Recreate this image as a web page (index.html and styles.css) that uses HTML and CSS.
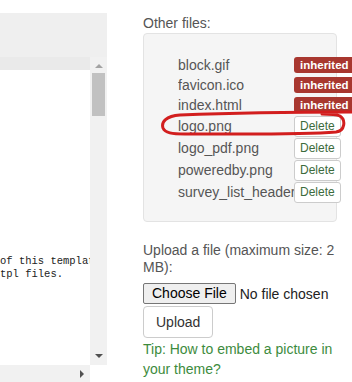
FILE: index.html
```html
<!DOCTYPE html>
<html>
<head>
  <title>Template editor - files</title>
  <link rel="stylesheet" href="styles.css">
</head>
<body>
  <div class="page">
    <div class="editor-pane">
      <div class="editor-head"></div>
      <div class="editor-body">
        <div class="code">
          <div class="code-bar"></div>
          <pre class="code-text">of this template
tpl files.</pre>
        </div>
        <div class="vscroll">
          <span class="arrow arrow-up"></span>
          <span class="thumb"></span>
          <span class="arrow arrow-down"></span>
        </div>
        <div class="hscroll"><span class="arrow arrow-right"></span></div>
        <div class="corner"></div>
      </div>
    </div>

    <div class="files-pane">
      <div class="files-label">Other files:</div>
      <div class="well">
        <ul class="file-list">
          <li class="file-row"><span class="file-name">block.gif</span><span class="badge">inherited</span></li>
          <li class="file-row"><span class="file-name">favicon.ico</span><span class="badge">inherited</span></li>
          <li class="file-row"><span class="file-name">index.html</span><span class="badge">inherited</span></li>
          <li class="file-row own"><span class="file-name">logo.png</span><button class="btn-delete" type="button">Delete</button></li>
          <li class="file-row own"><span class="file-name">logo_pdf.png</span><button class="btn-delete" type="button">Delete</button></li>
          <li class="file-row own"><span class="file-name">poweredby.png</span><button class="btn-delete" type="button">Delete</button></li>
          <li class="file-row own"><span class="file-name">survey_list_header.png</span><button class="btn-delete" type="button">Delete</button></li>
        </ul>
      </div>

      <form class="upload">
        <label class="upload-label" for="upload-file">Upload a file (maximum size: 2 MB):</label>
        <div class="file-pick">
          <input type="file" id="upload-file" class="file-input">
          <label for="upload-file" class="file-btn">Choose File</label>
          <span class="file-status">No file chosen</span>
        </div>
        <button class="btn-upload" type="submit">Upload</button>
        <div class="tip">Tip: How to embed a picture in your theme?</div>
      </form>
    </div>

    <!-- hand-drawn marker round logo.png -->
    <svg class="highlight" width="194" height="36" viewBox="158 104 194 36">
      <path d="M 352 112 C 320 112, 230 113, 180 115 C 166 116, 161 122, 163 128 C 165 133, 172 134, 185 134 C 240 134, 300 135, 336 132 C 345 131, 346 120, 340 116 C 336 114, 330 114, 322 114"
            fill="none" stroke="#d21e1e" stroke-width="3" stroke-linecap="round"/>
    </svg>
  </div>
</body>
</html>
```

FILE: styles.css
```css
html, body {
  margin: 0;
  padding: 0;
  overflow: hidden;
  background-color: #ffffff;
}

.page {
  position: relative;
  display: flex;
  width: 352px;
  height: 382px;
  overflow: hidden;
  font-family: "Liberation Sans", Arial, sans-serif;
}

/* left: code editor fragment */
.editor-pane {
  width: 107px;
  margin-top: 13px;
  display: flex;
  flex-direction: column;
  flex-shrink: 0;
}

.editor-head {
  height: 44px;
  background-color: #efefef;
}

.editor-body {
  flex: 1;
  display: grid;
  grid-template-columns: 90px 17px;
  grid-template-rows: 1fr 17px;
}

.code {
  background-color: #ffffff;
  overflow: hidden;
}

.code-bar {
  height: 13px;
  background-color: #eaeaea;
}

.code-text {
  margin: 0;
  padding-top: 185px;
  font-family: "Liberation Mono", "DejaVu Sans Mono", monospace;
  font-size: 10.5px;
  line-height: 13px;
  color: #222222;
  white-space: pre;
}

.vscroll {
  display: flex;
  flex-direction: column;
  align-items: center;
  background-color: #f1f1f1;
}

.thumb {
  width: 13px;
  height: 43px;
  margin-top: 5px;
  background-color: #c1c1c1;
}

.arrow {
  width: 0;
  height: 0;
}

.arrow-up {
  margin-top: 7px;
  border-left: 4px solid transparent;
  border-right: 4px solid transparent;
  border-bottom: 4px solid #a3a3a3;
}

.arrow-down {
  margin-top: auto;
  margin-bottom: 7px;
  border-left: 4px solid transparent;
  border-right: 4px solid transparent;
  border-top: 4px solid #505050;
}

.hscroll {
  display: flex;
  justify-content: flex-end;
  align-items: center;
  padding-right: 6px;
  background-color: #f1f1f1;
}

.arrow-right {
  border-top: 4px solid transparent;
  border-bottom: 4px solid transparent;
  border-left: 4px solid #505050;
}

.corner {
  background-color: #ffffff;
}

/* right: other files + upload */
.files-pane {
  width: 209px;
  margin-left: 36px;
  flex-shrink: 0;
  font-size: 14px;
  color: #555555;
}

.files-label {
  margin-top: 13px;
  line-height: 20px;
}

.well {
  width: 194px;
  box-sizing: border-box;
  padding: 21px 0 18px 34px;
  background-color: #f5f5f5;
  border: 1px solid #e3e3e3;
  border-radius: 4px;
}

.file-list {
  list-style: none;
  margin: 0;
  padding: 0;
}

.file-row {
  display: flex;
  align-items: center;
  height: 20px;
}

.file-row.own {
  height: 22px;
}

.file-name {
  width: 116px;
  flex-shrink: 0;
  overflow: hidden;
  white-space: nowrap;
  line-height: 20px;
}

.badge {
  flex-shrink: 0;
  padding: 0 6px;
  background-color: #a8372f;
  color: #ffffff;
  font-size: 11.5px;
  font-weight: bold;
  line-height: 16px;
  white-space: nowrap;
  border-radius: 3px;
}

.btn-delete {
  flex-shrink: 0;
  height: 21px;
  padding: 0 5px;
  background-color: #ffffff;
  color: #3c6b3c;
  border: 1px solid #cccccc;
  border-radius: 3px;
  font-family: "Liberation Sans", Arial, sans-serif;
  font-size: 12px;
  cursor: pointer;
}

.upload {
  margin: 20px 0 0 0;
}

.upload-label {
  display: block;
  line-height: 17px;
}

.file-pick {
  display: flex;
  align-items: center;
  margin-top: 7px;
}

.file-input {
  display: none;
}

.file-btn {
  padding: 1px 8px;
  line-height: 17px;
  background-color: #efefef;
  color: #000000;
  border: 1px solid #767676;
  border-radius: 2px;
  cursor: pointer;
}

.file-status {
  margin-left: 4px;
  color: #222222;
}

.btn-upload {
  display: block;
  height: 32px;
  margin-top: 2px;
  padding: 0 12px;
  background-color: #ffffff;
  color: #333333;
  border: 1px solid #cccccc;
  border-radius: 4px;
  font-family: "Liberation Sans", Arial, sans-serif;
  font-size: 14px;
  cursor: pointer;
}

.tip {
  margin-top: 1px;
  line-height: 20px;
  color: #3d8b3d;
}

.highlight {
  position: absolute;
  left: 158px;
  top: 104px;
  overflow: visible;
}
```
